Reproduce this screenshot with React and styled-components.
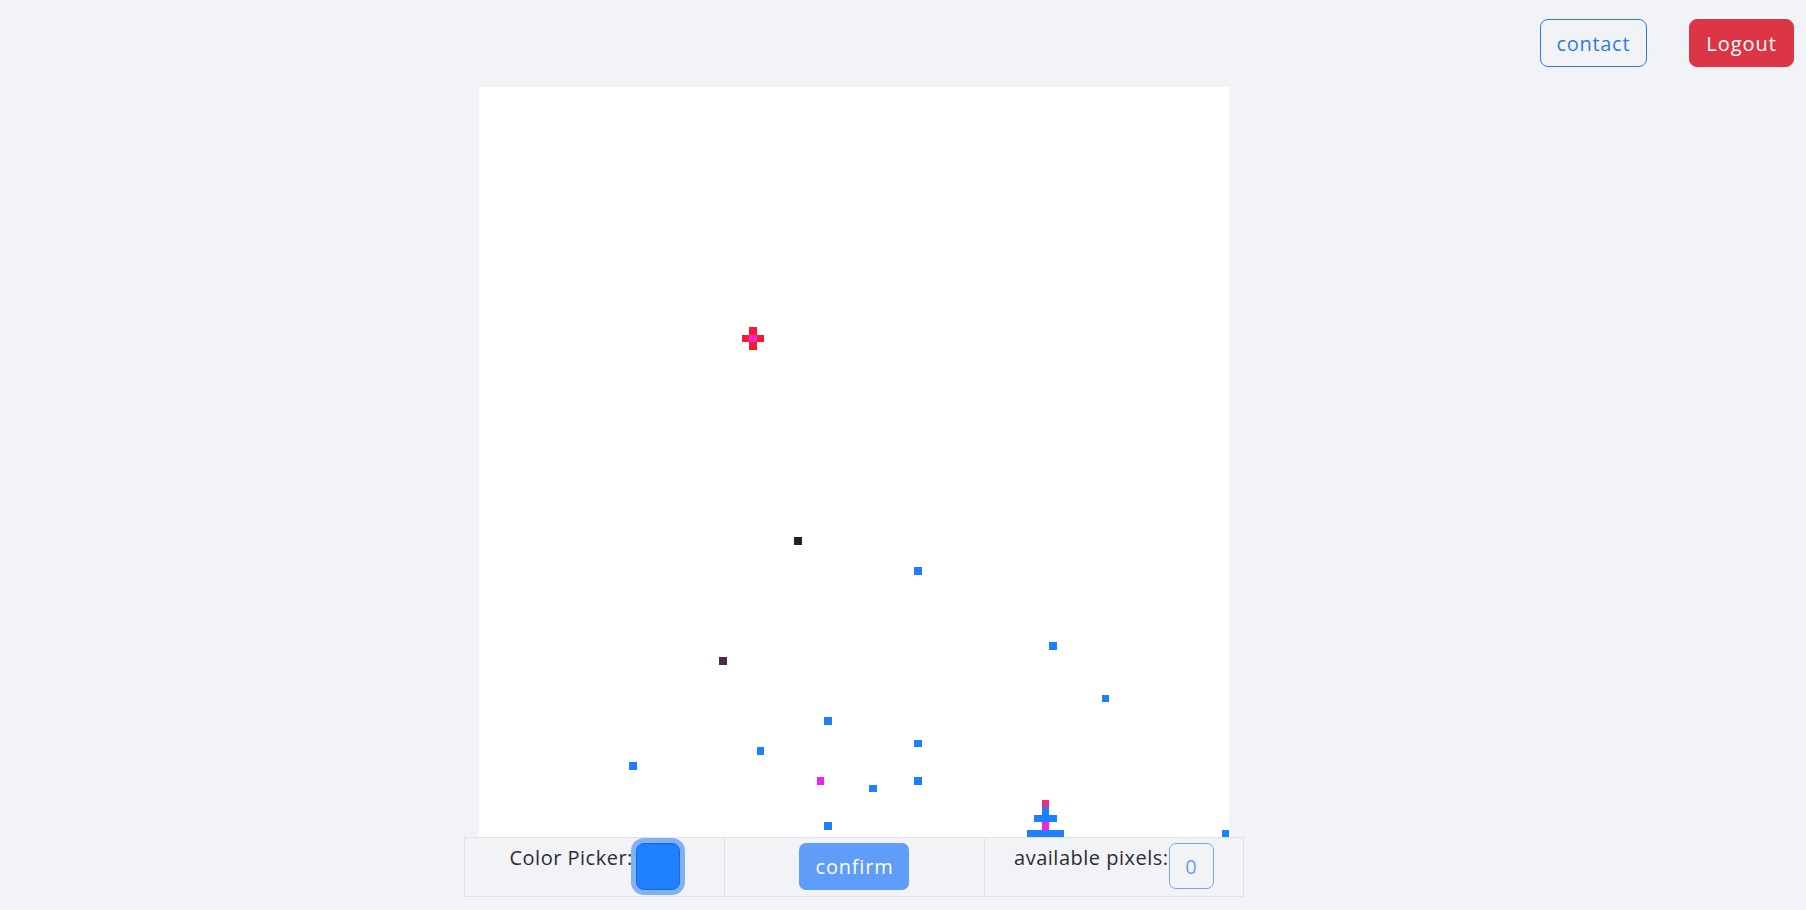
import React from 'react';
import styled, { createGlobalStyle } from 'styled-components';

const CELL = 7.5;
const BLUE = '#1f80fd';

// [col, row, colour] on the 100x100 board
const PIXELS = [
  [36, 32, '#fb1a2b'],
  [35, 33, '#fb1a2b'],
  [36, 33, '#f424d6'],
  [37, 33, '#fb1a2b'],
  [36, 34, '#fb1a2b'],
  [42, 60, '#222326'],
  [58, 64, BLUE],
  [76, 74, BLUE],
  [32, 76, '#4d2b4c'],
  [83, 81, BLUE],
  [46, 84, BLUE],
  [58, 87, BLUE],
  [37, 88, BLUE],
  [20, 90, BLUE],
  [45, 92, '#f424e6'],
  [58, 92, BLUE],
  [52, 93, BLUE],
  [75, 95, '#f5287a'],
  [75, 96, BLUE],
  [74, 97, BLUE],
  [75, 97, BLUE],
  [76, 97, BLUE],
  [46, 98, BLUE],
  [75, 98, '#f424d6'],
  [73, 99, BLUE],
  [74, 99, BLUE],
  [75, 99, BLUE],
  [76, 99, BLUE],
  [77, 99, BLUE],
  [99, 99, BLUE],
];

const GlobalStyle = createGlobalStyle`
  body {
    margin: 0;
    background: #f2f3f7;
    font-family: "Open Sans", "Liberation Sans", sans-serif;
    color: #2b2d31;
  }
`;

const Page = styled.div`
  min-height: 910px;
  display: flex;
  flex-direction: column;
`;

const Nav = styled.nav`
  display: flex;
  justify-content: flex-end;
  gap: 42px;
  padding: 19px 12px 0 0;
`;

const NavButton = styled.button`
  height: 48px;
  padding: 0 16px;
  font-family: inherit;
  font-size: 20px;
  letter-spacing: ${p => (p.danger ? '1px' : '0.7px')};
  border-radius: 8px;
  border: 1px solid ${p => (p.danger ? '#dc3545' : '#2f7ce0')};
  background: ${p => (p.danger ? '#dc3545' : 'transparent')};
  color: ${p => (p.danger ? '#fff' : '#2f7ce0')};
  cursor: pointer;
`;

const Board = styled.main`
  width: 780px;
  margin: 20px 0 0 464px;
  display: flex;
  flex-direction: column;
  align-items: center;
`;

const Canvas = styled.svg`
  display: block;
  width: 750px;
  height: 750px;
  background: #fff;
`;

const Controls = styled.div`
  width: 780px;
  display: grid;
  grid-template-columns: repeat(3, 1fr);
  border: 1px solid #dfe2e7;
  box-sizing: border-box;
  height: 60px;
`;

const Cell = styled.div`
  display: flex;
  justify-content: center;
  align-items: flex-start;
  padding-top: 5px;
  border-left: ${p => (p.first ? 'none' : '1px solid #dfe2e7')};
`;

const Label = styled.span`
  font-size: 20px;
  line-height: 30px;
  letter-spacing: 0.5px;
  color: #2b2d31;
`;

const Swatch = styled.div`
  width: 44px;
  height: 47px;
  margin-left: 3px;
  box-sizing: border-box;
  border-radius: 8px;
  background: ${BLUE};
  border: 1px solid #1868d6;
  box-shadow: 0 0 0 5px #82b0f7;
`;

const Confirm = styled.button`
  width: 110px;
  height: 47px;
  border: none;
  border-radius: 7px;
  background: #5e9df9;
  color: #fff;
  font-family: inherit;
  font-size: 20px;
  letter-spacing: 0.8px;
`;

const Counter = styled.div`
  width: 45px;
  height: 46px;
  box-sizing: border-box;
  border: 1px solid #7ba6e6;
  border-radius: 7px;
  display: flex;
  align-items: center;
  justify-content: center;
  font-size: 20px;
  color: #6c9fe8;
`;

export default function App() {
  return (
    <Page>
      <GlobalStyle />
      <Nav>
        <NavButton>contact</NavButton>
        <NavButton danger>Logout</NavButton>
      </Nav>
      <Board>
        <Canvas viewBox="0 0 750 750" shapeRendering="crispEdges">
          {PIXELS.map(([c, r, fill]) => (
            <rect key={`${c}-${r}`} x={c * CELL} y={r * CELL} width={CELL} height={CELL} fill={fill} />
          ))}
        </Canvas>
        <Controls>
          <Cell first>
            <Label>Color Picker:</Label>
            <Swatch />
          </Cell>
          <Cell>
            <Confirm>confirm</Confirm>
          </Cell>
          <Cell>
            <Label>available pixels:</Label>
            <Counter>0</Counter>
          </Cell>
        </Controls>
      </Board>
    </Page>
  );
}
